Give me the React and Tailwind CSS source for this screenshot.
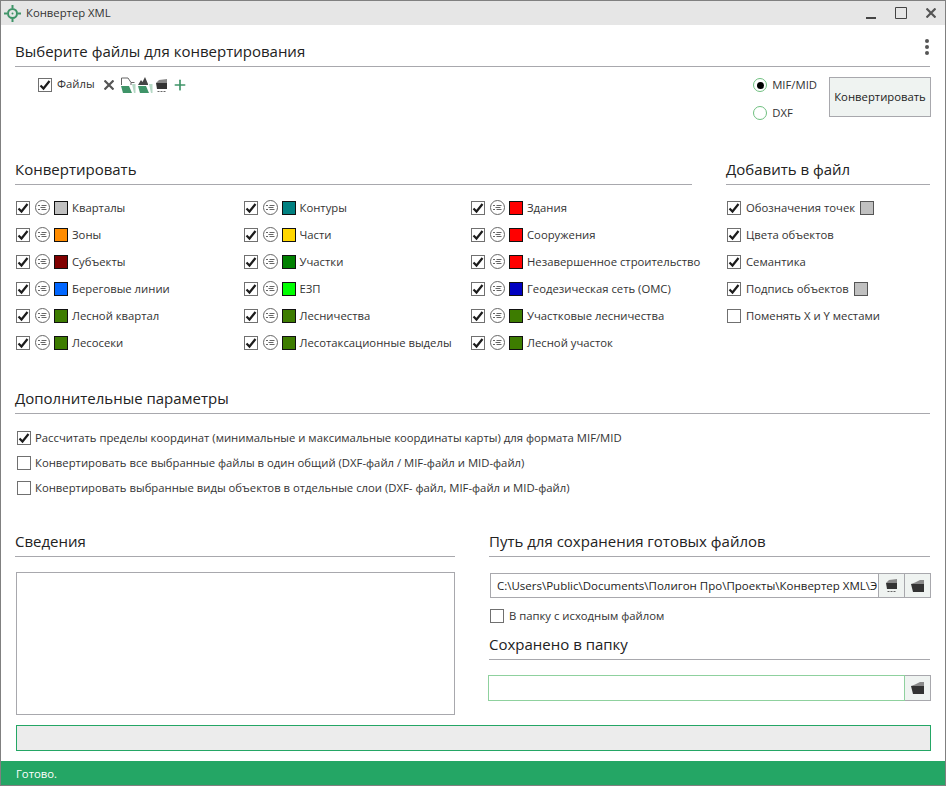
import React from 'react';
import { Plus } from 'lucide-react';

const Checkbox = ({ checked = true }) => (
  <span className="w-[14px] h-[14px] shrink-0 bg-white border border-[#707070] flex items-center justify-center">
    {checked && (
      <svg width="12" height="12" viewBox="0 0 12 12" fill="none" stroke="#1c1c1c" strokeWidth="2.2">
        <path d="M1.500 6.500L4.500 9.500L10.500 2" />
      </svg>
    )}
  </span>
);

// little list-in-a-circle icon before each colour swatch
const ListIcon = () => (
  <svg width="15" height="15" viewBox="0 0 15 15" className="shrink-0" fill="none" stroke="#666" strokeWidth="1">
    <circle cx="7.500" cy="7.500" r="7" />
    <path d="M3 5.500h2M6.500 5.500h5M3 9.500h2M6.500 9.500h5M5.500 7.500h5" />
  </svg>
);

const FolderIcon = () => (
  <svg width="15" height="14" viewBox="0 0 15 14">
    <path d="M1 5L5 3.500L10 1H14V5z" fill="#8a8a8a" />
    <path d="M1 5H14V13H3z" fill="#333" />
  </svg>
);

const DriveFolderIcon = () => (
  <svg width="13" height="15" viewBox="0 0 13 15">
    <path d="M1 5L4 2L12 1V5z" fill="#8a8a8a" />
    <path d="M1 5H12V11H2z" fill="#333" />
    <path d="M2.500 13h2v1h-2zM5.500 13h2v1h-2zM8.500 13h2v1h-2z" fill="#666" />
  </svg>
);

const GreenFolder = ({ trees }) => (
  <svg width="16" height="18" viewBox="0 0 16 18" className="shrink-0">
    {trees ? (
      <path d="M1 9l3-5 1.500 2L8 1l3 7v1z" fill="#444" />
    ) : (
      <path d="M1.500 9V2H8l3 4.500V9M11 6.500h3.500" fill="none" stroke="#666" strokeWidth="1" />
    )}
    <path d="M1 10h8l3 7H3z" fill="#3f9468" />
    <path d="M12 8h3.500v9H14z" fill="#b5d8c5" />
  </svg>
);

const Heading = ({ children, className = '' }) => (
  <div className={`border-b border-[#a8a8ad] text-[15px] leading-[18px] text-[#222] ${className}`}>
    {children}
  </div>
);

const Swatch = ({ color, className = '' }) => (
  <span className={`w-[14px] h-[14px] shrink-0 border border-[#111] ${className}`} style={{ backgroundColor: color }} />
);

const Layer = ({ label, color }) => (
  <div className="h-[27px] flex items-center">
    <Checkbox />
    <span className="ml-[5px] flex"><ListIcon /></span>
    <Swatch color={color} className="ml-[4px]" />
    <span className="ml-[4px] whitespace-nowrap">{label}</span>
  </div>
);

const columns = [
  {
    width: 'w-[228px]',
    items: [
      ['Кварталы', '#c0c0c0'],
      ['Зоны', '#ff8c00'],
      ['Субъекты', '#800000'],
      ['Береговые линии', '#0066ff'],
      ['Лесной квартал', '#3d7c00'],
      ['Лесосеки', '#3d7c00'],
    ],
  },
  {
    width: 'w-[228px]',
    items: [
      ['Контуры', '#008080'],
      ['Части', '#ffd700'],
      ['Участки', '#008000'],
      ['ЕЗП', '#00ff00'],
      ['Лесничества', '#3d7c00'],
      ['Лесотаксационные выделы', '#3d7c00'],
    ],
  },
  {
    width: 'w-[221px]',
    items: [
      ['Здания', '#ff0000'],
      ['Сооружения', '#ff0000'],
      ['Незавершенное строительство', '#ff0000'],
      ['Геодезическая сеть (ОМС)', '#0000c0'],
      ['Участковые лесничества', '#3d7c00'],
      ['Лесной участок', '#3d7c00'],
    ],
  },
];

const params = [
  [true, 'Рассчитать пределы координат (минимальные и максимальные координаты карты) для формата MIF/MID'],
  [false, 'Конвертировать все выбранные файлы в один общий (DXF-файл / MIF-файл и MID-файл)'],
  [false, 'Конвертировать выбранные виды объектов в отдельные слои (DXF- файл, MIF-файл и MID-файл)'],
];

const App = () => {
  return (
    <div className="w-[946px] h-[786px] flex flex-col bg-white border-x border-[#808080] text-[11.3px] leading-[16px] text-[#333] font-['Open_Sans','Noto_Sans',sans-serif] overflow-hidden">
      {/* Title bar */}
      <div className="h-[25px] shrink-0 bg-[#e6e6e6] border-t border-[#808080] flex items-center pl-[3px] pr-[9px]">
        <svg width="17" height="17" viewBox="0 0 17 17" fill="none" stroke="#3f9468" strokeWidth="2">
          <circle cx="8.500" cy="8.500" r="4.500" />
          <circle cx="8.500" cy="8.500" r="1" fill="#3f9468" stroke="none" />
          <path d="M8.500 0v3M8.500 14v3M0 8.500h3M14 8.500h3" />
        </svg>
        <span className="ml-[5px] text-[#333]">Конвертер XML</span>
        <div className="ml-auto flex items-center text-[#444]">
          <svg width="10" height="12" viewBox="0 0 10 12"><path d="M0 10h10v2H0z" fill="#444" /></svg>
          <svg className="ml-[19px]" width="12" height="12" viewBox="0 0 12 12" fill="none" stroke="#444" strokeWidth="1"><path d="M.5.500h11v11H.5z" /></svg>
          <svg className="ml-[19px]" width="10" height="10" viewBox="0 0 10 10" fill="none" stroke="#555" strokeWidth="2.200"><path d="M.5.500l9 9M9.500.500l-9 9" /></svg>
        </div>
      </div>

      <div className="flex-1 flex flex-col pl-[14px] pr-[15px]">
        {/* Files */}
        <div className="relative mt-[17px]">
          <Heading className="h-[25px]">Выберите файлы для конвертирования</Heading>
          <span className="absolute right-0 top-[-3px] flex flex-col gap-[2px] pr-[1px]">
            <i className="w-[4px] h-[4px] rounded-full bg-[#555]" />
            <i className="w-[4px] h-[4px] rounded-full bg-[#555]" />
            <i className="w-[4px] h-[4px] rounded-full bg-[#555]" />
          </span>
        </div>
        <div className="h-[51px] mt-[10px] flex">
          <div className="pl-[23px] h-[16px] flex items-center">
            <Checkbox />
            <span className="ml-[5px] pb-[2px]">Файлы</span>
            <svg className="ml-[9px]" width="10" height="10" viewBox="0 0 10 10" fill="none" stroke="#555" strokeWidth="2.200"><path d="M.5.500l9 9M9.500.500l-9 9" /></svg>
            <span className="ml-[6px] flex"><GreenFolder /></span>
            <span className="ml-[1px] flex"><GreenFolder trees /></span>
            <span className="ml-[2px] flex"><DriveFolderIcon /></span>
            <Plus className="ml-[4px] w-[16px] h-[16px] text-[#3f9468]" strokeWidth={2.500} />
          </div>
          <div className="ml-auto mr-[-1px] flex">
            <div className="flex flex-col gap-[12px]">
              <label className="flex items-center gap-[5px] h-[16px]">
                <span className="w-[14px] h-[14px] rounded-full border border-[#6fbf7f] flex items-center justify-center">
                  <i className="w-[7px] h-[7px] rounded-full bg-black" />
                </span>
                MIF/MID
              </label>
              <label className="flex items-center gap-[5px] h-[16px]">
                <span className="w-[14px] h-[14px] rounded-full border border-[#6fbf7f]" />
                DXF
              </label>
            </div>
            <button className="ml-[12px] w-[102px] h-[40px] bg-[#eff3f1] border border-[#a8a8ad] text-[#222]">
              Конвертировать
            </button>
          </div>
        </div>

        {/* Convert + add to file */}
        <div className="mt-[32px] flex">
          <div className="w-[677px]">
            <Heading className="h-[25px]">Конвертировать</Heading>
            <div className="mt-[9px] pl-[1px] flex">
              {columns.map((col, i) => (
                <div key={i} className={col.width}>
                  {col.items.map(([label, color]) => (
                    <Layer key={label} label={label} color={color} />
                  ))}
                </div>
              ))}
            </div>
          </div>
          <div className="ml-[34px] flex-1">
            <Heading className="h-[25px]">Добавить в файл</Heading>
            <div className="mt-[9px] pl-[1px]">
              <div className="h-[27px] flex items-center gap-[5px]"><Checkbox />Обозначения точек <Swatch color="#c0c0c0" className="border-[#555]" /></div>
              <div className="h-[27px] flex items-center gap-[5px]"><Checkbox />Цвета объектов</div>
              <div className="h-[27px] flex items-center gap-[5px]"><Checkbox />Семантика</div>
              <div className="h-[27px] flex items-center gap-[5px]"><Checkbox />Подпись объектов <Swatch color="#c0c0c0" className="border-[#555]" /></div>
              <div className="h-[27px] flex items-center gap-[5px]"><Checkbox checked={false} />Поменять X и Y местами</div>
            </div>
          </div>
        </div>

        {/* Extra params */}
        <Heading className="h-[25px] mt-[33px]">Дополнительные параметры</Heading>
        <div className="mt-[11px] pl-[2px]">
          {params.map(([checked, label]) => (
            <div key={label} className="h-[25px] flex items-center gap-[4px]">
              <Checkbox checked={checked} />
              {label}
            </div>
          ))}
        </div>

        {/* Info + save path */}
        <div className="mt-[32px] flex">
          <div className="w-[440px]">
            <Heading className="h-[25px]">Сведения</Heading>
            <div className="mt-[15px] ml-[1px] h-[143px] bg-white border border-[#a8a8ad]" />
          </div>
          <div className="ml-[34px] w-[441px]">
            <Heading className="h-[25px]">Путь для сохранения готовых файлов</Heading>
            <div className="mt-[16px] mr-[-1px] flex h-[25px]">
              <div className="ml-[1px] flex-1 min-w-0 border border-[#a8a8ad] px-[6px] text-[11.5px] leading-[23px] whitespace-nowrap overflow-hidden text-[#222]">
                C:\Users\Public\Documents\Полигон Про\Проекты\Конвертер XML\Э
              </div>
              <button className="w-[26px] bg-[#eff3f1] border-y border-r border-[#a8a8ad] flex items-center justify-center"><DriveFolderIcon /></button>
              <button className="w-[26px] bg-[#eff3f1] border-y border-r border-[#a8a8ad] flex items-center justify-center"><FolderIcon /></button>
            </div>
            <div className="mt-[10px] ml-[1px] h-[16px] flex items-center gap-[5px]">
              <Checkbox checked={false} />
              В папку с исходным файлом
            </div>
            <Heading className="h-[25px] mt-[11px]">Сохранено в папку</Heading>
            <div className="mt-[15px] ml-[-1px] mr-[-1px] flex h-[26px]">
              <div className="flex-1 border border-[#8fd19e]" />
              <button className="w-[26px] bg-[#eff3f1] border-y border-r border-[#a8a8ad] flex items-center justify-center"><FolderIcon /></button>
            </div>
          </div>
        </div>

        {/* Progress */}
        <div className="mt-[10px] ml-[1px] mr-[-1px] h-[26px] bg-[#ececec] border border-[#24a665]" />
      </div>

      {/* Status */}
      <div className="h-[25px] shrink-0 bg-[#24a665] border-b border-[#808080] pl-[15px] text-white leading-[26px]">Готово.</div>
    </div>
  );
};

export default App;
